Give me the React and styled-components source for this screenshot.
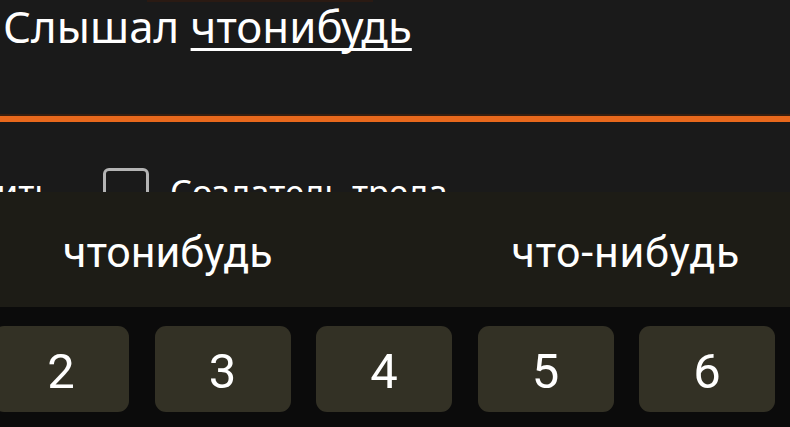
import React from "react";
import styled, { createGlobalStyle } from "styled-components";

const Global = createGlobalStyle`
  html, body { margin: 0; padding: 0; background: #1a1a1a; }
  body { width: 790px; height: 427px; overflow: hidden; }
`;

const Page = styled.div`
  width: 790px;
  height: 427px;
  display: flex;
  flex-direction: column;
  overflow: hidden;
  background: #1a1a1a;
  font-family: "Noto Sans", "Open Sans", sans-serif;
  color: #ffffff;
`;

const Header = styled.div`
  height: 114px;
  flex: none;
  display: flex;
  flex-direction: column;
  background: #1a1a1a;
`;

const TopStub = styled.div`
  margin-left: 147px;
  width: 226px;
  height: 2px;
  background: #2a1a13;
`;

const Title = styled.div`
  padding: 2px 0 0 3px;
  font-size: 43.8px;
  line-height: 44px;
  white-space: nowrap;
`;

const Link = styled.span`
  text-decoration: underline;
  text-decoration-thickness: 3px;
  text-underline-offset: 5px;
  text-decoration-skip-ink: none;
`;

const Divider = styled.div`
  height: 6px;
  flex: none;
  border-top: 2px solid #3a1f0f;
  background: #e8681c;
`;

const OptionsRow = styled.div`
  height: 70px;
  flex: none;
  box-sizing: border-box;
  padding-top: 46px;
  display: flex;
  align-items: flex-start;
  overflow: hidden;
`;

const ClippedLabelBox = styled.div`
  width: 53px;
  flex: none;
  display: flex;
  justify-content: flex-end;
  height: 46px;
  align-items: center;
`;

const Label = styled.span`
  font-size: 34.5px;
  white-space: nowrap;
  color: #ffffff;
`;

const CheckItem = styled.div`
  display: flex;
  align-items: center;
  height: 46px;
  margin-left: 50px;
`;

const Checkbox = styled.div`
  flex: none;
  width: 46px;
  height: 46px;
  box-sizing: border-box;
  border: 3.5px solid #b4b4b4;
  border-radius: 6px;
  margin-right: 21px;
`;

const SuggestionBar = styled.div`
  height: 115px;
  flex: none;
  box-sizing: border-box;
  background: #1d1c16;
  display: flex;
  align-items: center;
  justify-content: space-between;
  padding: 4px 50px 0 63px;
`;

const Suggestion = styled.span`
  font-family: Roboto, "Noto Sans", sans-serif;
  font-size: 43px;
  letter-spacing: ${(p) => p.$spacing || 0}px;
  color: #ffffff;
  white-space: nowrap;
`;

const KeyRow = styled.div`
  flex: 1;
  background: #0b0b0b;
  padding-top: 19px;
  box-sizing: border-box;
  overflow: hidden;
`;

const Keys = styled.div`
  display: flex;
  gap: 25.5px;
  margin-left: -7px;
`;

const Key = styled.div`
  flex: none;
  width: 136px;
  height: 86px;
  border-radius: 11px;
  background: #333125;
  display: flex;
  align-items: center;
  justify-content: center;
  font-family: Roboto, "Noto Sans", sans-serif;
  font-size: 49px;
  color: #ffffff;
  padding-top: 4px;
  box-sizing: border-box;
`;

export default function App() {
  return (
    <>
      <Global />
      <Page>
        <Header>
          <TopStub />
          <Title>
            Слышал <Link>чтонибудь</Link>
          </Title>
        </Header>
        <Divider />
        <OptionsRow>
          <ClippedLabelBox>
            <Label>Обновить</Label>
          </ClippedLabelBox>
          <CheckItem>
            <Checkbox />
            <Label>Создатель треда</Label>
          </CheckItem>
        </OptionsRow>
        <SuggestionBar>
          <Suggestion>чтонибудь</Suggestion>
          <Suggestion $spacing={0.7}>что-нибудь</Suggestion>
        </SuggestionBar>
        <KeyRow>
          <Keys>
            {["2", "3", "4", "5", "6"].map((k) => (
              <Key key={k}>{k}</Key>
            ))}
          </Keys>
        </KeyRow>
      </Page>
    </>
  );
}
